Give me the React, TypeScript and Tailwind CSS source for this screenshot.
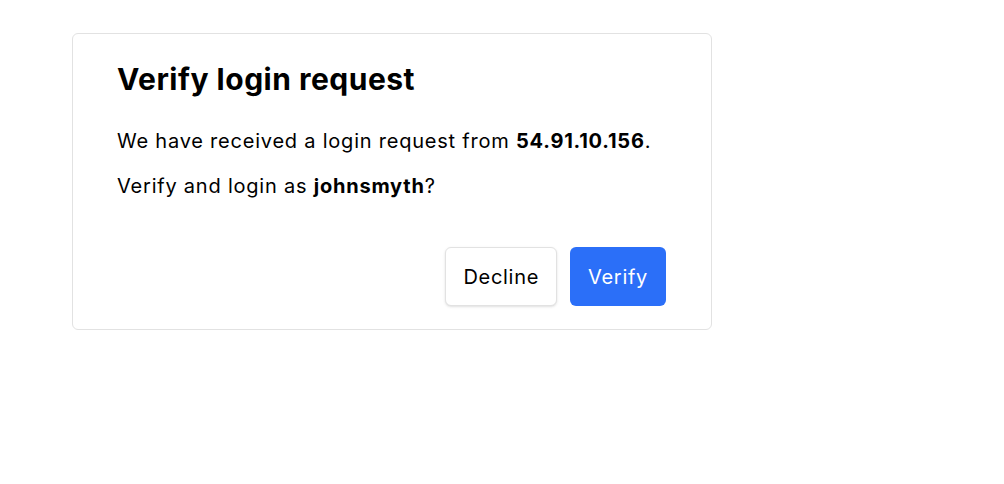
const App = () => {
  return (
    <div className="min-h-screen bg-white pl-[72px] pt-[33px] font-['Inter',sans-serif] text-black">
      <div className="w-[640px] rounded-md border border-[#e2e2e2] pl-[44px] pr-[45px] pt-[27px] pb-[23px]">
        <h1 className="text-[30px] font-bold leading-9 tracking-[0.5px]">Verify login request</h1>
        <p className="mt-[30px] text-[20px] leading-7 tracking-[0.78px]">
          We have received a login request from <b>54.91.10.156</b>.
        </p>
        <p className="mt-[17px] text-[20px] leading-7 tracking-[0.78px]">
          Verify and login as <b>johnsmyth</b>?
        </p>
        <div className="mt-[47px] flex justify-end gap-[13px]">
          <button className="rounded-md border border-[#e2e2e2] bg-white px-[17px] py-[14.5px] text-[20px] leading-7 tracking-[0.7px] shadow-sm">
            Decline
          </button>
          <button className="rounded-md bg-[#2b6ff8] px-[18px] py-[15.5px] text-[20px] leading-7 tracking-[0.7px] text-white">
            Verify
          </button>
        </div>
      </div>
    </div>
  );
};

export default App;
